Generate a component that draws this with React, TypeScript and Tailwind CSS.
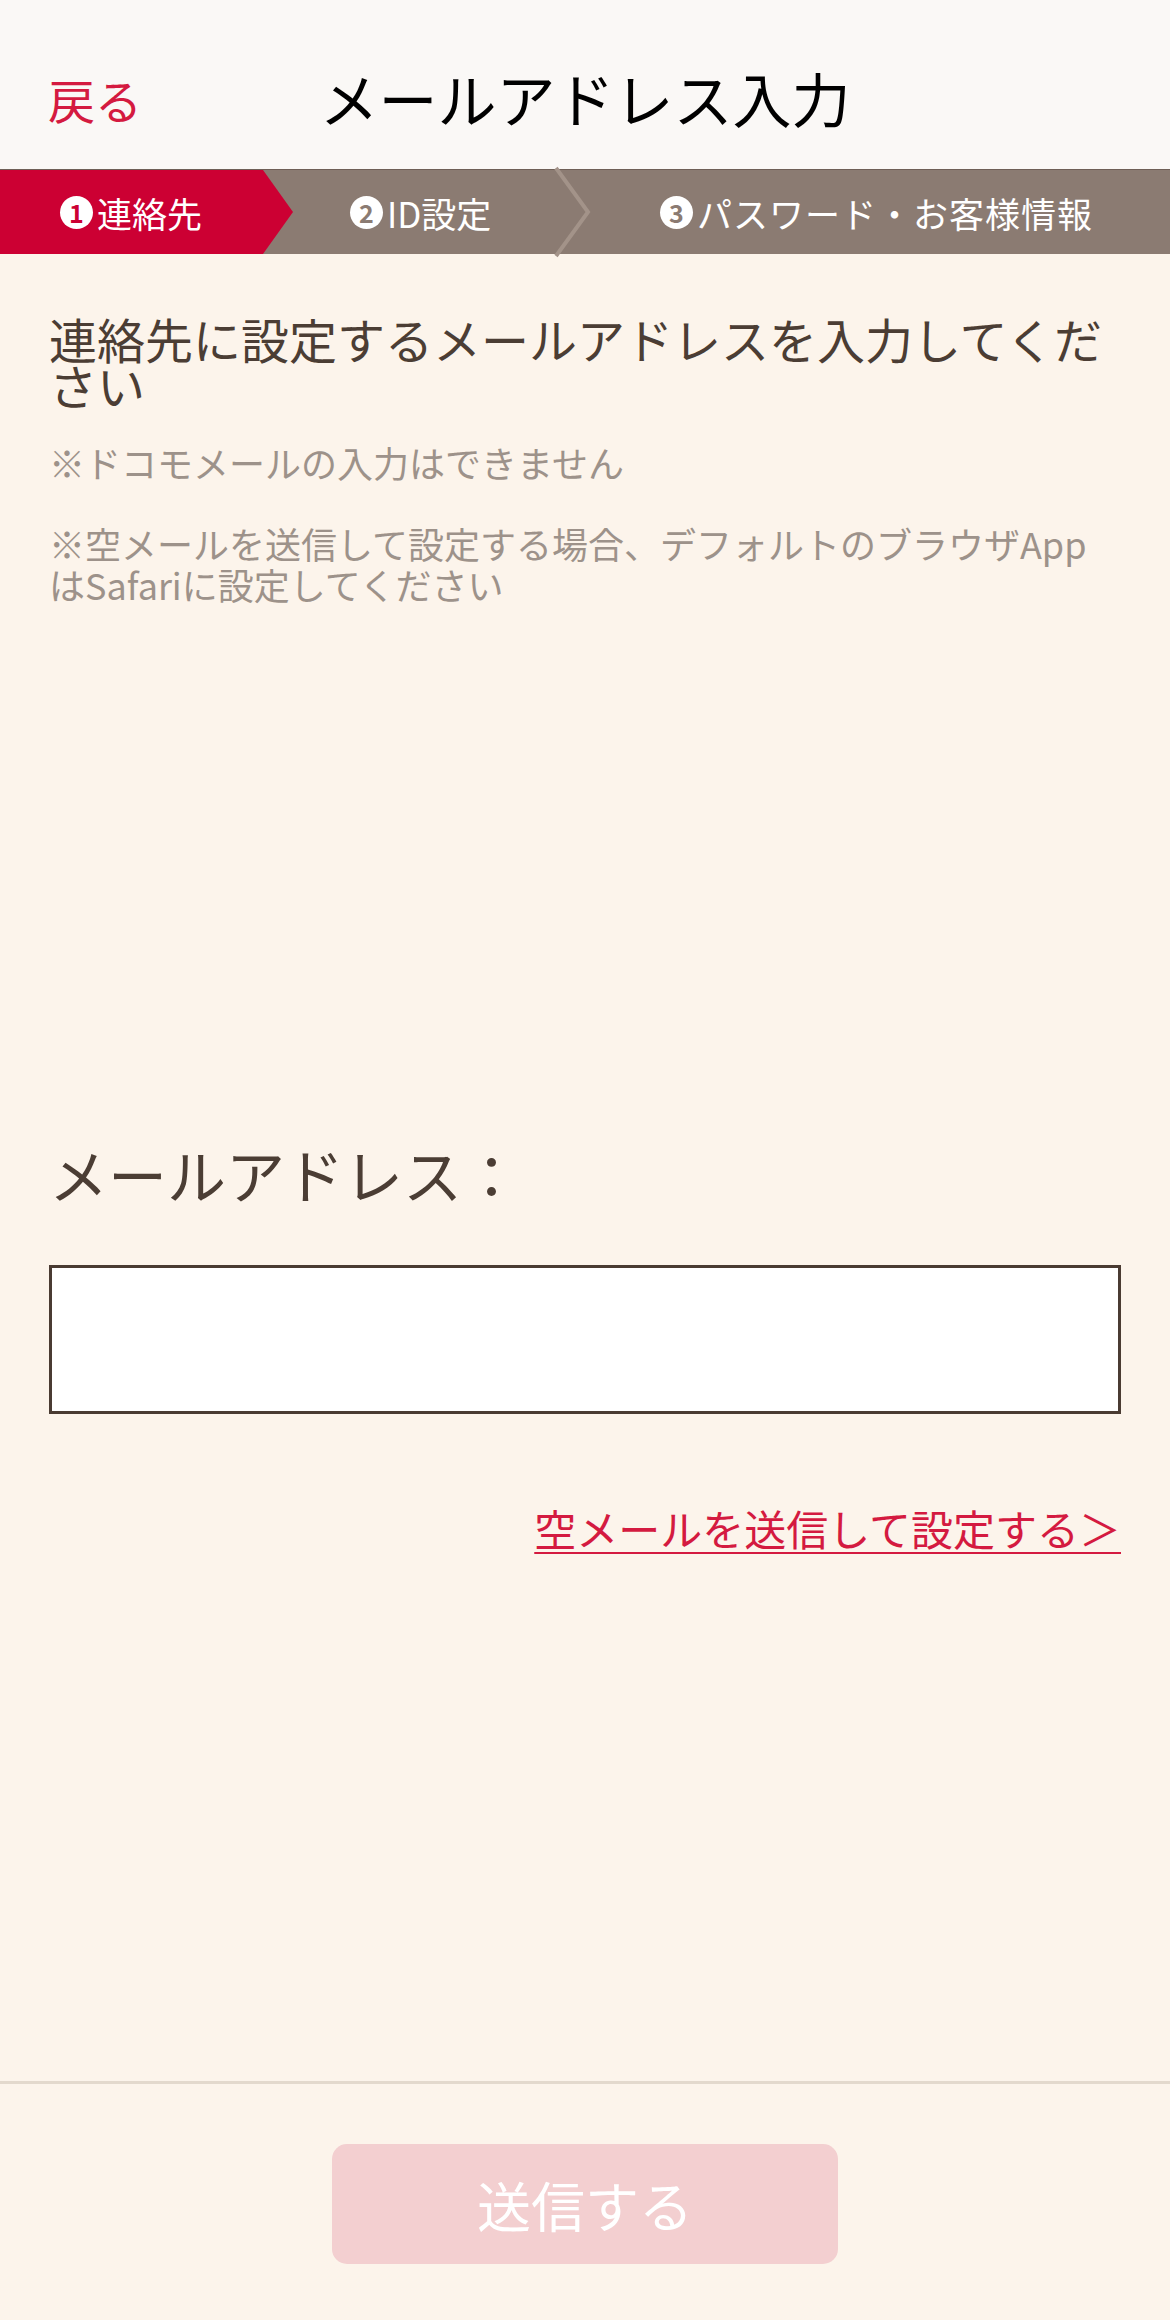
import React from "react";

const font = { fontFamily: '"Noto Sans CJK JP", "Noto Sans", sans-serif' };

function StepBadge({ n, color }: { n: string; color: string }) {
  return (
    <span
      className={`mr-[4px] flex h-[33px] w-[33px] items-center justify-center rounded-full bg-white text-[25px] font-bold leading-none ${color}`}
    >
      {n}
    </span>
  );
}

const StepBar = () => {
  return (
    <div className="relative flex h-[84px] bg-[#8b7b72] text-[35px] leading-none text-white">
      {/* step 1 - active */}
      <div className="flex w-[293px] items-center bg-[#cc0033] pl-[60px] [clip-path:polygon(0_0,263px_0,293px_50%,263px_100%,0_100%)]">
        <StepBadge n="1" color="text-[#cc0033]" />
        <span>連絡先</span>
      </div>

      {/* step 2 */}
      <div className="relative flex w-[297px] items-center pl-[57px]">
        <StepBadge n="2" color="text-[#8b7b72]" />
        <span>ID設定</span>
        <svg
          className="absolute top-0 left-[257px] overflow-visible"
          width="45"
          height="84"
          viewBox="0 0 45 84"
        >
          <polyline
            points="6,-2 38,42 6,86"
            fill="none"
            stroke="#a39389"
            strokeWidth="4"
          />
        </svg>
      </div>

      {/* step 3 */}
      <div className="flex flex-1 items-center pl-[70px]">
        <StepBadge n="3" color="text-[#8b7b72]" />
        <span className="tracking-[1px]">パスワード・お客様情報</span>
      </div>
    </div>
  );
};

export default function App() {
  return (
    <div className="flex h-[2320px] w-full flex-col bg-[#fcf4eb]" style={font}>
      {/* Header */}
      <header className="relative flex h-[170px] shrink-0 items-center justify-center border-b border-[#6e5f56] bg-[#faf8f6] pt-[26px]">
        <button className="absolute left-[48px] top-[26px] flex h-[144px] items-center text-[47px] leading-none text-[#d41a40]">
          戻る
        </button>
        <h1 className="text-[59px] leading-none text-black">メールアドレス入力</h1>
      </header>

      <StepBar />

      {/* Main */}
      <main className="flex flex-1 flex-col px-[49px]">
        <h2 className="mt-[61px] text-[48px] leading-[46px] text-[#4b3d34]">
          連絡先に設定するメールアドレスを入力してください
        </h2>
        <p className="mt-[35px] text-[36px] leading-[41px] text-[#9d928a]">
          ※ドコモメールの入力はできません
        </p>
        <p className="mt-[40px] text-[36px] leading-[41px] text-[#9d928a]">
          ※空メールを送信して設定する場合、デフォルトのブラウザAppはSafariに設定してください
        </p>

        <label className="mt-[536px] text-[59px] leading-[66px] text-[#4b3d34]">
          メールアドレス：
        </label>
        <input
          type="email"
          className="mt-[58px] h-[149px] w-full border-[3px] border-[#4a3b32] bg-white px-4 text-[40px] outline-none"
        />

        <div className="mt-[89px] flex justify-end">
          <a
            href="#"
            className="text-[42px] leading-[50px] text-[#d41a40] underline decoration-2 underline-offset-[6px]"
          >
            空メールを送信して設定する＞
          </a>
        </div>
      </main>

      {/* Footer */}
      <footer className="flex shrink-0 justify-center border-t-[3px] border-[#e3d9cd] pt-[60px] pb-[56px]">
        <button
          disabled
          className="h-[120px] w-[506px] rounded-[15px] bg-[#f3cfd0] text-[54px] text-white"
        >
          送信する
        </button>
      </footer>
    </div>
  );
}
